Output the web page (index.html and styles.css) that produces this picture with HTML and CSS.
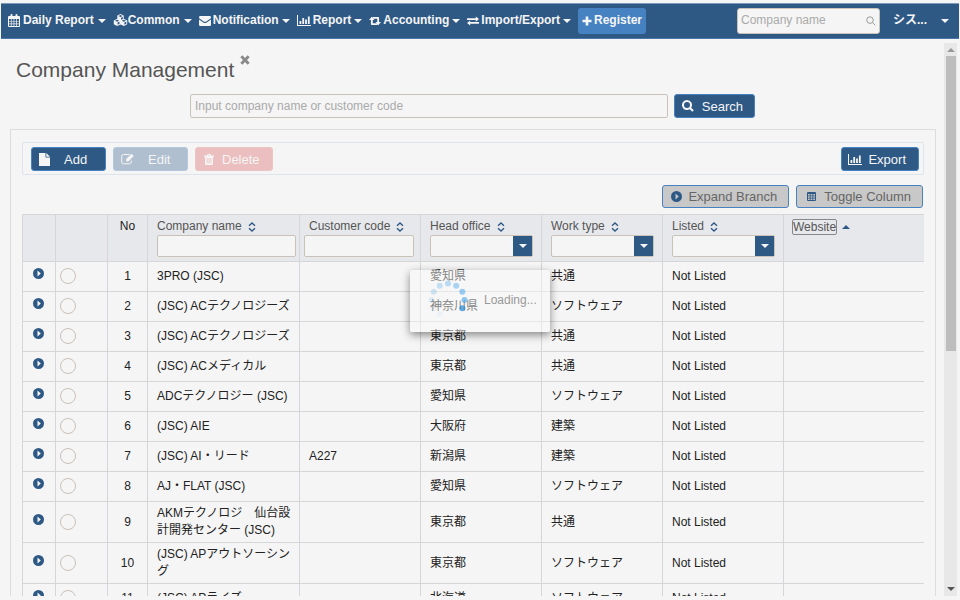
FILE: index.html
```html
<!DOCTYPE html>
<html lang="en">
<head>
<meta charset="utf-8">
<title>Company Management</title>
<link rel="stylesheet" href="styles.css">
</head>
<body>
<svg class="sprite" aria-hidden="true">
  <symbol id="i-calendar" viewBox="0 0 12 13"><path fill-rule="evenodd" d="M1 2h1.500V1a1 1 0 0 1 2 0v1h3V1a1 1 0 0 1 2 0v1H11a1 1 0 0 1 1 1v9a1 1 0 0 1-1 1H1a1 1 0 0 1-1-1V3a1 1 0 0 1 1-1zM1 5v1.900h1.900V5zM3.600 5v1.900h2V5zM6.300 5v1.900h2V5zM9 5v1.900h2V5zM1 7.600v1.900h1.900V7.600zM3.600 7.600v1.900h2V7.600zM6.300 7.600v1.900h2V7.600zM9 7.600v1.900h2V7.600zM1 10.200v1.900h1.900v-1.900zM3.600 10.200v1.900h2v-1.900zM6.300 10.200v1.900h2v-1.900zM9 10.200v1.900h2v-1.900z"/></symbol>
  <symbol id="i-cubes" viewBox="0 0 15 13"><path fill-rule="evenodd" d="M7.500 0l3.200 1.400v3.400L14.200 6.400v3.800L10.900 12 7.500 10.400 4.100 12 .8 10.200V6.400L4.300 4.800V1.400zM7.500 1L5.400 2l2.100.9 2.100-.9zM8 3.800v2l1.800-.8V3zM4.100 5.800L2 6.800l2.100.9 2.100-.9zM4.600 8.600v2.200l1.900-1V7.800zM10.900 5.800l-2.100 1 2.100.9 2.100-.9zM11.400 8.600v2.200l1.900-1V7.800z"/></symbol>
  <symbol id="i-mail" viewBox="0 0 12 10"><path d="M0 1.200A1.200 1.200 0 0 1 1.200 0h9.600A1.200 1.200 0 0 1 12 1.200c0 .8-.6 1.500-1.200 1.900L7.300 5.600c-.9.600-1.700.6-2.600 0L1.200 3.100C.6 2.700 0 2 0 1.200zM0 3.400l4.300 3.100c1.200.8 2.200.8 3.400 0L12 3.400v5.400a1.200 1.200 0 0 1-1.200 1.200H1.200A1.200 1.200 0 0 1 0 8.800z"/></symbol>
  <symbol id="i-chart" viewBox="0 0 14 11"><path d="M0 0h1v10h13v1H0zM2.500 6h1.800v3H2.500zM5.300 3h1.800v6H5.300zM8.100 4.500h1.800V9H8.100zM10.900 1.500h1.800V9h-1.800z"/></symbol>
  <symbol id="i-retweet" viewBox="0 0 13 9"><path d="M3 0l3 3.400H4.100V7H8l1.500 1.800H2.900c-.5 0-.8-.3-.8-.8V3.400H0zM10 9L7 5.600h1.900V2H5L3.500.2h6.600c.5 0 .8.300.8.800v4.600H13z"/></symbol>
  <symbol id="i-exchange" viewBox="0 0 12 9"><path d="M0 1.800h8.800V0L12 2.600 8.800 5.200V3.400H0zM12 5.600H3.200V3.900L0 6.500 3.200 9V7.200H12z"/></symbol>
  <symbol id="i-plus" viewBox="0 0 10 10"><path d="M3.700.5h2.600v3.200h3.200v2.600H6.300v3.200H3.700V6.300H.5V3.700h3.200z"/></symbol>
  <symbol id="i-search" viewBox="0 0 12 12"><path fill-rule="evenodd" d="M5 0a5 5 0 0 1 4.200 7.700l2.600 2.600-1.500 1.500-2.600-2.600A5 5 0 1 1 5 0zm0 2a3 3 0 1 0 0 6 3 3 0 0 0 0-6z"/></symbol>
  <symbol id="i-lens" viewBox="0 0 10 10"><path fill="none" stroke="currentColor" d="M4 .8a3.300 3.300 0 1 1 0 6.600 3.300 3.300 0 0 1 0-6.600zM6.500 6.500l2.800 2.800"/></symbol>
  <symbol id="i-close" viewBox="0 0 10 10"><path d="M2.300.3L5 3 7.700.3l2 2L7 5l2.700 2.700-2 2L5 7 2.300 9.700l-2-2L3 5 .3 2.300z"/></symbol>
  <symbol id="i-file" viewBox="0 0 11 13"><path d="M0 0h6.500v4.500H11V13H0zM7.300 0L11 3.700H7.300z"/></symbol>
  <symbol id="i-edit" viewBox="0 0 13 11"><path fill="none" stroke="currentColor" d="M8.500 1h-6A1.800 1.800 0 0 0 .700 2.800v5.700a1.800 1.800 0 0 0 1.800 1.800h6a1.800 1.800 0 0 0 1.800-1.800V7"/><path d="M10.500.2l2.200 2.200L7.400 8H5.200V5.600z"/></symbol>
  <symbol id="i-trash" viewBox="0 0 10 11"><path fill-rule="evenodd" d="M3 1.500L3.500 0h3L7 1.500h3v1.200H9V10a1 1 0 0 1-1 1H2a1 1 0 0 1-1-1V2.700H0V1.500zm1 0h2L5.800.9H4.200zM2.700 4v5.500h.8V4zM4.600 4v5.500h.8V4zM6.500 4v5.500h.8V4z"/></symbol>
  <symbol id="i-expand" viewBox="0 0 11 11"><path fill-rule="evenodd" d="M5.500 0a5.500 5.500 0 1 1 0 11 5.500 5.500 0 0 1 0-11zM4.500 2.600v5.800L7.800 5.500z"/></symbol>
  <symbol id="i-grid" viewBox="0 0 9 9"><path fill-rule="evenodd" d="M1 0h7a1 1 0 0 1 1 1v7a1 1 0 0 1-1 1H1a1 1 0 0 1-1-1V1a1 1 0 0 1 1-1zM1 2v1.500h1.700V2zM3.600 2v1.500h1.800V2zM6.300 2v1.500H8V2zM1 4.300v1.500h1.700V4.300zM3.600 4.300v1.500h1.800V4.300zM6.300 4.300v1.500H8V4.300zM1 6.600v1.500h1.700V6.600zM3.600 6.600v1.500h1.800V6.600zM6.300 6.600v1.500H8V6.600z"/></symbol>
  <symbol id="i-sort" viewBox="0 0 8 10"><path fill="none" stroke="currentColor" stroke-width="1.400" d="M1 3.700L4 1l3 2.700M1 6.300L4 9l3-2.700"/></symbol>
  <symbol id="i-down" viewBox="0 0 8 4"><path d="M0 0h8L4 4z"/></symbol>
  <symbol id="i-up" viewBox="0 0 8 4"><path d="M0 4h8L4 0z"/></symbol>
</svg>

<header class="topbar">
  <nav class="menu">
    <a href="#" class="roomy"><svg class="w12 h13"><use href="#i-calendar"/></svg>Daily Report<svg class="caret"><use href="#i-down"/></svg></a>
    <a href="#" class="tight"><svg class="w15 h13"><use href="#i-cubes"/></svg>Common<svg class="caret"><use href="#i-down"/></svg></a>
    <a href="#"><svg class="w12 h10"><use href="#i-mail"/></svg>Notification<svg class="caret"><use href="#i-down"/></svg></a>
    <a href="#"><svg class="w14 h11"><use href="#i-chart"/></svg>Report<svg class="caret"><use href="#i-down"/></svg></a>
    <a href="#"><svg class="w12 h10"><use href="#i-retweet"/></svg>Accounting<svg class="caret"><use href="#i-down"/></svg></a>
    <a href="#"><svg class="w12 h10"><use href="#i-exchange"/></svg>Import/Export<svg class="caret"><use href="#i-down"/></svg></a>
    <button type="button" class="register"><svg class="w10 h10"><use href="#i-plus"/></svg>Register</button>
  </nav>
  <form class="quick">
    <input type="text" placeholder="Company name" aria-label="Company name">
    <svg class="w10 h10"><use href="#i-lens"/></svg>
  </form>
  <a href="#" class="user">シス...<svg class="caret"><use href="#i-down"/></svg></a>
</header>

<div class="viewport">
  <main class="page">
    <div class="heading">
      <h1>Company Management</h1>
      <button type="button" aria-label="Close"><svg class="w10 h10"><use href="#i-close"/></svg></button>
    </div>
    <form class="search">
      <input type="text" class="field" placeholder="Input company name or customer code" aria-label="Company name or customer code">
      <button type="button" class="btn primary"><svg class="w12 h12"><use href="#i-search"/></svg>Search</button>
    </form>
    <section class="panel">
      <div class="toolbar">
        <button type="button" class="btn primary wide"><svg class="w11 h13"><use href="#i-file"/></svg>Add</button>
        <button type="button" class="btn edit wide" disabled><svg class="w13 h12"><use href="#i-edit"/></svg>Edit</button>
        <button type="button" class="btn delete" disabled><svg class="w10 h11"><use href="#i-trash"/></svg>Delete</button>
        <button type="button" class="btn primary export"><svg class="w14 h11"><use href="#i-chart"/></svg>Export</button>
      </div>
      <div class="options">
        <button type="button" class="btn gray"><svg class="w11 h11"><use href="#i-expand"/></svg>Expand Branch</button>
        <button type="button" class="btn gray"><svg class="w9 h9"><use href="#i-grid"/></svg>Toggle Column</button>
      </div>
      <table>
        <colgroup><col class="c-open"><col class="c-pick"><col class="c-no"><col class="c-name"><col class="c-std"><col class="c-std"><col class="c-std"><col class="c-std"><col></colgroup>
        <thead>
          <tr>
            <th></th>
            <th></th>
            <th class="num">No</th>
            <th><label for="f-name">Company name<svg class="sort"><use href="#i-sort"/></svg></label><input id="f-name" type="text" class="field"></th>
            <th class="code"><label for="f-code">Customer code<svg class="sort"><use href="#i-sort"/></svg></label><input id="f-code" type="text" class="field"></th>
            <th class="pick"><label for="f-office">Head office<svg class="sort"><use href="#i-sort"/></svg></label><div class="combo"><input id="f-office" type="text"><button type="button" aria-label="Open"><svg class="caret"><use href="#i-down"/></svg></button></div></th>
            <th class="pick"><label for="f-work">Work type<svg class="sort"><use href="#i-sort"/></svg></label><div class="combo"><input id="f-work" type="text"><button type="button" aria-label="Open"><svg class="caret"><use href="#i-down"/></svg></button></div></th>
            <th class="pick"><label for="f-listed">Listed<svg class="sort"><use href="#i-sort"/></svg></label><div class="combo"><input id="f-listed" type="text"><button type="button" aria-label="Open"><svg class="caret"><use href="#i-down"/></svg></button></div></th>
            <th><div class="sorted"><a href="#">Website</a><svg class="caret"><use href="#i-up"/></svg></div></th>
          </tr>
        </thead>
        <tbody id="rows"></tbody>
      </table>
    </section>
  </main>
  <div class="scrollbar" aria-hidden="true">
    <svg class="caret"><use href="#i-up"/></svg>
    <div class="track"><div class="thumb"></div></div>
    <svg class="caret dark"><use href="#i-down"/></svg>
  </div>
</div>

<div class="loading" role="status">
  <svg viewBox="0 0 40 40">
    <circle cx="20" cy="3.500" r="3" opacity=".55"/><circle cx="28.200" cy="5.700" r="3" opacity=".7"/><circle cx="34.300" cy="11.700" r="3" opacity=".85"/><circle cx="36.500" cy="20" r="3" opacity=".95"/><circle cx="34.300" cy="28.200" r="3" class="lead"/><circle cx="11.700" cy="34.300" r="3" opacity=".08"/><circle cx="5.700" cy="28.200" r="3" opacity=".1"/><circle cx="3.500" cy="20" r="3" opacity=".22"/><circle cx="5.700" cy="11.700" r="3" opacity=".36"/><circle cx="11.700" cy="5.700" r="3" opacity=".46"/>
  </svg>
  <span>Loading...</span>
</div>
<script src="rows.js"></script>
</body>
</html>
```
FILE: rows.js
```js
const companies = [
  ["3PRO (JSC)", "", "愛知県", "共通"],
  ["(JSC) ACテクノロジーズ", "", "神奈川県", "ソフトウェア"],
  ["(JSC) ACテクノロジーズ", "", "東京都", "共通"],
  ["(JSC) ACメディカル", "", "東京都", "共通"],
  ["ADCテクノロジー (JSC)", "", "愛知県", "ソフトウェア"],
  ["(JSC) AIE", "", "大阪府", "建築"],
  ["(JSC) AI・リード", "A227", "新潟県", "建築"],
  ["AJ・FLAT (JSC)", "", "愛知県", "ソフトウェア"],
  ["AKMテクノロジ　仙台設計開発センター (JSC)", "", "東京都", "共通"],
  ["(JSC) APアウトソーシング", "", "東京都", "ソフトウェア"],
  ["(JSC) APライズ", "", "北海道", "ソフトウェア"]
];

document.getElementById("rows").innerHTML = companies.map(([name, code, office, work], i) => `
  <tr>
    <td class="open"><button type="button" aria-label="Expand"><svg class="w11 h11"><use href="#i-expand"/></svg></button></td>
    <td class="choose"><input type="radio" name="company" aria-label="Select row ${i + 1}"></td>
    <td class="num">${i + 1}</td>
    <td>${name}</td>
    <td>${code}</td>
    <td>${office}</td>
    <td>${work}</td>
    <td>Not Listed</td>
    <td></td>
  </tr>`).join("");
```
FILE: styles.css
```css
* {
  box-sizing: border-box;
}

body {
  margin: 0;
  padding: 3px 1px 4px;
  height: 100vh;
  display: flex;
  flex-direction: column;
  gap: 4px;
  overflow: hidden;
  background: #f5f5f5;
  color: #222;
  font: 12px/17px "Liberation Sans", "Noto Sans CJK JP", sans-serif;
}

button,
input {
  font: inherit;
  margin: 0;
}

button {
  padding: 0;
  border: 0;
  background: none;
  color: inherit;
}

a {
  color: inherit;
  text-decoration: none;
}

svg {
  flex: none;
  fill: currentColor;
}

.sprite {
  position: absolute;
  width: 0;
  height: 0;
}

.w9 { width: 9px; }
.w10 { width: 10px; }
.w11 { width: 11px; }
.w12 { width: 12px; }
.w13 { width: 13px; }
.w14 { width: 14px; }
.w15 { width: 15px; }
.h9 { height: 9px; }
.h10 { height: 10px; }
.h11 { height: 11px; }
.h12 { height: 12px; }
.h13 { height: 13px; }

.caret {
  width: 8px;
  height: 4px;
}

::placeholder {
  color: #aaa;
  opacity: 1;
}

/* Top bar */

.topbar {
  flex: none;
  display: flex;
  align-items: center;
  height: 36px;
  padding: 0 10px 1px 7px;
  background: #2f5985;
  border-top: 1px solid #7f9bbb;
  border-bottom: 1px solid #4c76a8;
  color: #f5f5f5;
  font-weight: bold;
}

.menu {
  flex: 1;
  display: flex;
  align-items: center;
  gap: 7px;
}

.menu a {
  display: flex;
  align-items: center;
  gap: 2px;
  white-space: nowrap;
}

.menu .roomy {
  gap: 3px;
}

.menu .tight {
  gap: 0;
}

.menu .caret {
  margin-left: 1px;
}

.menu .tight .caret {
  margin-left: 4px;
}

.register {
  display: flex;
  align-items: center;
  justify-content: center;
  gap: 2px;
  width: 68px;
  height: 26px;
  border-radius: 3px;
  background: #4682c2;
  font-weight: bold;
}

.quick {
  display: flex;
  align-items: center;
  width: 143px;
  height: 26px;
  padding: 0 3px;
  background: #f5f5f5;
  border: 1px solid #c9c2b9;
  border-radius: 3px;
  color: #999;
  font-weight: normal;
}

.quick input {
  flex: 1;
  min-width: 0;
  padding: 0;
  border: 0;
  background: none;
}

.user {
  display: flex;
  align-items: center;
  gap: 14px;
  margin-left: 13px;
}

/* Page */

.viewport {
  flex: 1;
  min-height: 0;
  display: flex;
  overflow: hidden;
}

.page {
  flex: 1;
  min-width: 0;
}

.heading {
  display: flex;
  align-items: flex-start;
  gap: 6px;
  padding: 12px 15px 0;
  color: #555;
}

.heading h1 {
  margin: 0;
  font-size: 21px;
  line-height: 30px;
  font-weight: normal;
}

.heading button {
  display: flex;
  color: #888;
}

.search {
  display: flex;
  gap: 6px;
  margin: 9px 189px 11px;
}

.field,
.combo {
  width: 100%;
  height: 22px;
  padding: 0 4px;
  background: #f5f5f5;
  border: 1px solid #c9c2b9;
  border-radius: 2px;
}

.search .field {
  flex: 1;
  height: 24px;
}

.search .btn {
  padding-right: 11px;
}

.btn {
  display: flex;
  align-items: center;
  gap: 8px;
  height: 24px;
  padding: 0 12px 0 7px;
  border: 1px solid #4682c2;
  border-radius: 3px;
  font-size: 13px;
  white-space: nowrap;
}

.primary {
  background: #2f5985;
  color: #f5f5f5;
}

.panel {
  margin: 0 8px 0 9px;
  padding: 12px 11px 0;
  border: 1px solid #ddd;
}

.toolbar {
  display: flex;
  gap: 7px;
  padding: 4px 4px 3px 8px;
  border: 1px solid #dde4ec;
  border-radius: 2px;
}

.wide {
  gap: 14px;
  width: 75px;
}

.edit {
  background: #afbfcf;
  border-color: #b3c8de;
  color: #f5f5f5;
}

.delete {
  background: #ebbfbf;
  border-color: #ebc4c4;
  color: #f5f5f5;
  padding-left: 8px;
}

.export {
  margin-left: auto;
  gap: 6px;
  padding-left: 6px;
}

.options {
  display: flex;
  justify-content: flex-end;
  gap: 7px;
  padding: 10px 1px 6px 0;
}

.gray {
  height: 23px;
  gap: 6px;
  background: #c8c8c8;
  color: #666;
  padding-left: 8px;
  padding-right: 11px;
}

.gray svg {
  color: #2f5985;
}

.gray .w9 {
  margin: 0 2px;
}

/* Table */

table {
  width: 100%;
  table-layout: fixed;
  border-collapse: collapse;
}

.c-open { width: 33px; }
.c-pick { width: 52px; }
.c-no { width: 40px; }
.c-name { width: 152px; }
.c-std { width: 121px; }

th,
td {
  padding: 3px 4px 3px 9px;
  border: 1px solid #d6d6d8;
}

th:last-child,
td:last-child {
  border-right: 0;
}

th {
  height: 47px;
  padding: 3px 3px 3px 9px;
  background: #e7e8ec;
  color: #555;
  font-weight: normal;
  text-align: left;
  vertical-align: top;
}

td {
  height: 30px;
}

.num {
  padding-left: 0;
  padding-right: 0;
  color: #222;
  text-align: center;
}

th label,
.sorted {
  display: flex;
  align-items: center;
  gap: 6px;
  height: 17px;
  white-space: nowrap;
}

th .field {
  display: block;
}

.code {
  padding-left: 4px;
  padding-right: 6px;
}

.code label {
  padding-left: 5px;
}

.pick {
  padding-right: 8px;
}

.sort {
  width: 8px;
  height: 10px;
  color: #2f5985;
}

.combo {
  display: flex;
  padding: 0;
}

.combo input {
  flex: 1;
  min-width: 0;
  padding: 0 4px;
  border: 0;
  background: none;
}

.combo button {
  display: flex;
  align-items: center;
  justify-content: center;
  width: 19px;
  background: #2f5985;
  color: #f5f5f5;
}

.sorted a {
  height: 14px;
  line-height: 14px;
  outline: 1px solid #888;
  border-radius: 1px;
}

.sorted .caret {
  color: #2f5985;
}

.open {
  padding: 0 0 6px 10px;
}

.open button {
  display: flex;
  color: #2f5985;
}

.choose {
  padding: 0 0 1px 4px;
}

.choose input {
  display: block;
  appearance: none;
  width: 16px;
  height: 16px;
  border: 1px solid #c9c2b9;
  border-radius: 50%;
}

/* Scrollbar */

.scrollbar {
  display: flex;
  flex-direction: column;
  align-items: center;
  justify-content: space-between;
  width: 13px;
  margin-right: 2px;
  padding: 5px 0;
  background: #e8e8e8;
  color: #999;
}

.scrollbar .dark {
  color: #555;
}

.track {
  flex: 1;
  width: 10px;
  margin: 4px 0;
}

.thumb {
  height: 56%;
  background: #bdbdbd;
}

/* Loading popup */

.loading {
  position: absolute;
  top: 270px;
  left: 50%;
  transform: translateX(-50%);
  display: flex;
  align-items: center;
  gap: 16px;
  width: 140px;
  height: 62px;
  padding: 0 15px 2px 18px;
  background: rgba(250, 250, 250, .45);
  border-radius: 2px;
  box-shadow: 0 3px 8px rgba(0, 0, 0, .45);
  color: #999;
}

.loading svg {
  width: 40px;
  height: 40px;
  fill: #4ba8ec;
  opacity: .65;
}

.loading .lead {
  fill: #1580d0;
}
```
